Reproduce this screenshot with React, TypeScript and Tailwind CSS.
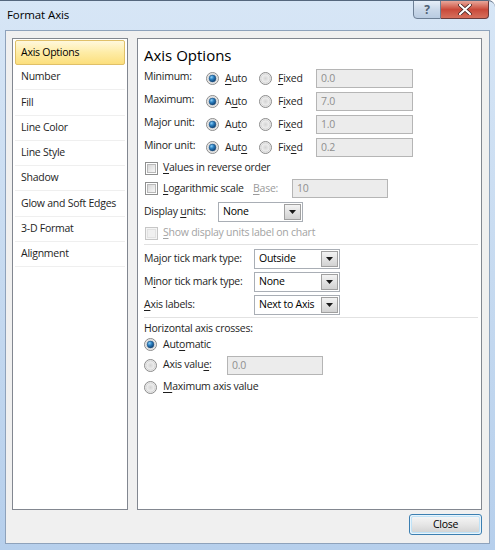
import React from "react";

const FONT = "font-['Segoe_UI','Open_Sans',sans-serif]";

function Radio({ checked = false }: { checked?: boolean }) {
  return (
    <svg width="13" height="13" viewBox="0 0 13 13" className="shrink-0">
      <defs>
        <radialGradient id="rfill" cx="50%" cy="50%" r="55%">
          <stop offset="0" stopColor="#d4d4d4" />
          <stop offset="0.7" stopColor="#ececec" />
          <stop offset="1" stopColor="#fafafa" />
        </radialGradient>
        <radialGradient id="rdot" cx="35%" cy="30%" r="75%">
          <stop offset="0" stopColor="#8fd0f8" />
          <stop offset="0.45" stopColor="#2a7fc0" />
          <stop offset="1" stopColor="#0d3b6b" />
        </radialGradient>
      </defs>
      <circle cx="6.5" cy="6.5" r="6" fill="#f4f4f4" stroke="#8a8a8a" strokeWidth="1" />
      <circle cx="6.5" cy="6.5" r="4.6" fill="url(#rfill)" stroke="#c8c8c8" strokeWidth="0.8" />
      {checked && <circle cx="6.5" cy="6.5" r="3.4" fill="url(#rdot)" stroke="#1c4f80" strokeWidth="0.6" />}
    </svg>
  );
}

function Check({ disabled = false }: { disabled?: boolean }) {
  return (
    <div
      className={`w-[13px] h-[13px] shrink-0 border ${
        disabled ? "border-[#c6c6c6] bg-[#f4f4f4]" : "border-[#8e8f8f] bg-white"
      } p-[1px]`}
    >
      <div
        className={`w-full h-full border ${
          disabled
            ? "border-[#e2e2e2] bg-[#f0f0f0]"
            : "border-[#b9b9b9] bg-gradient-to-br from-[#d8d8d8] to-[#f7f7f7]"
        }`}
      />
    </div>
  );
}

function TextBox({ value, w }: { value: string; w: string }) {
  return (
    <div
      className={`${w} h-[19px] shrink-0 border border-[#b5b5b5] bg-[#ececec] text-[#8f8f8f] pl-[4px] flex items-center leading-none`}
    >
      {value}
    </div>
  );
}

function Select({ value, w }: { value: string; w: string }) {
  return (
    <div
      className={`${w} h-[20px] shrink-0 border border-[#a9aeb5] bg-white flex items-center p-[1px]`}
    >
      <span className="flex-1 pl-[3px] leading-none text-black whitespace-nowrap">{value}</span>
      <div className="w-[17px] h-full shrink-0 border border-[#a0a0a0] bg-gradient-to-b from-[#f3f3f3] to-[#d2d2d2] flex items-center justify-center">
        <svg width="7" height="4" viewBox="0 0 7 4">
          <path d="M0 0 H7 L3.5 4 Z" fill="#1a1a1a" />
        </svg>
      </div>
    </div>
  );
}

function U({ children }: { children: React.ReactNode }) {
  return <span className="underline underline-offset-[2px]">{children}</span>;
}

function AxisRow({
  label,
  auto,
  fixed,
  value,
}: {
  label: string;
  auto: React.ReactNode;
  fixed: React.ReactNode;
  value: string;
}) {
  return (
    <div className="flex h-[23px] items-center">
      <span className="w-[62px] shrink-0 -mt-[4px] whitespace-nowrap">{label}</span>
      <Radio checked />
      <span className="ml-[6px] w-[34px] shrink-0">{auto}</span>
      <Radio />
      <span className="ml-[6px] w-[38px] shrink-0">{fixed}</span>
      <TextBox value={value} w="w-[97px]" />
    </div>
  );
}

const items = [
  "Axis Options",
  "Number",
  "Fill",
  "Line Color",
  "Line Style",
  "Shadow",
  "Glow and Soft Edges",
  "3-D Format",
  "Alignment",
];

export default function App() {
  return (
    <div
      className={`${FONT} w-[495px] h-[550px] overflow-hidden text-[10.5px] tracking-[-0.25px] text-[#1e1e1e] bg-gradient-to-b from-[#d7e6f6] via-[#c6daf0] to-[#b6cfec] rounded-tr-[7px] border-t border-[#55677d] flex flex-col`}
    >
      {/* Title bar */}
      <div className="h-[29px] shrink-0 flex items-start relative">
        <span className="mt-[5px] ml-[7px] text-[11.5px] tracking-[-0.1px] text-black">Format Axis</span>
        <div className="absolute top-[-1px] right-[6px] flex">
          <div className="w-[28px] h-[19px] border border-[#6d7f95] rounded-bl-[4px] bg-gradient-to-b from-[#e6eef8] via-[#cad8e9] to-[#b9cbe1] flex items-center justify-center text-[12px] font-bold text-[#4f5f73]">
            ?
          </div>
          <div className="w-[48px] h-[19px] border border-l-0 border-[#6b3a3a] rounded-br-[4px] bg-gradient-to-b from-[#e7a69a] via-[#c9493a] to-[#d66f5c] flex items-center justify-center">
            <svg width="14" height="11" viewBox="0 0 14 11">
              <path d="M2 1 L12 10 M12 1 L2 10" stroke="#3a2020" strokeWidth="3.6" strokeLinecap="round" />
              <path d="M2 1 L12 10 M12 1 L2 10" stroke="#ffffff" strokeWidth="2.2" strokeLinecap="round" />
            </svg>
          </div>
        </div>
      </div>

      {/* Client area */}
      <div className="ml-[5px] mr-[5px] h-[514px] border border-[#8ea2bb] bg-[#f0f0f0] flex flex-col pt-[7px] pl-[6px] pr-[6px]">
        <div className="flex h-[472px] gap-[9px]">
          {/* Left list */}
          <div className="w-[116px] h-full border border-[#828790] bg-white pt-[1px] px-[2px]">
            {items.map((it, i) =>
              i === 0 ? (
                <div
                  key={it}
                  className="h-[25px] border border-[#e0c068] rounded-[2px] bg-gradient-to-b from-[#fff8dc] via-[#feeca6] to-[#fcdf7c] flex items-center pl-[5px] text-black"
                >
                  {it}
                </div>
              ) : (
                <div
                  key={it}
                  className="h-[25.25px] border-b border-[#efefef] flex items-center pl-[6px] text-[#1e1e1e] whitespace-nowrap"
                >
                  {it}
                </div>
              )
            )}
          </div>

          {/* Right panel */}
          <div className="w-[345px] h-full border border-[#828790] bg-white pl-[6px] pr-[3px] pt-[6px] flex flex-col">
            <div className="h-[22px] text-[15px] tracking-normal leading-[20px] text-black">Axis Options</div>

            <AxisRow label="Minimum:" auto={<><U>A</U>uto</>} fixed={<><U>F</U>ixed</>} value="0.0" />
            <AxisRow label="Maximum:" auto={<>A<U>u</U>to</>} fixed={<>F<U>i</U>xed</>} value="7.0" />
            <AxisRow label="Major unit:" auto={<>Au<U>t</U>o</>} fixed={<>Fi<U>x</U>ed</>} value="1.0" />
            <AxisRow label="Minor unit:" auto={<>Aut<U>o</U></>} fixed={<>Fix<U>e</U>d</>} value="0.2" />

            <div className="flex h-[18px] items-center">
              <div className="ml-[1px]"><Check /></div>
              <span className="ml-[5px]"><U>V</U>alues in reverse order</span>
            </div>
            <div className="flex h-[23px] items-center">
              <div className="ml-[1px]"><Check /></div>
              <span className="ml-[5px] w-[90px] shrink-0 whitespace-nowrap"><U>L</U>ogarithmic scale</span>
              <span className="w-[39px] shrink-0 text-[#9a9a9a]"><U>B</U>ase:</span>
              <TextBox value="10" w="w-[96px]" />
            </div>
            <div className="flex h-[23px] items-center">
              <span className="w-[74px] shrink-0">Display <U>u</U>nits:</span>
              <Select value="None" w="w-[85px]" />
            </div>
            <div className="flex h-[20px] items-center">
              <div className="ml-[1px]"><Check disabled /></div>
              <span className="ml-[5px] text-[#a3a3a3]"><U>S</U>how display units label on chart</span>
            </div>
            <div className="h-[1px] bg-[#e2e2e2] mt-[1px] mb-[2px]" />

            <div className="flex h-[23px] items-center">
              <span className="w-[110px] shrink-0">Ma<U>j</U>or tick mark type:</span>
              <Select value="Outside" w="w-[86px]" />
            </div>
            <div className="flex h-[23px] items-center">
              <span className="w-[110px] shrink-0">M<U>i</U>nor tick mark type:</span>
              <Select value="None" w="w-[86px]" />
            </div>
            <div className="flex h-[23px] items-center">
              <span className="w-[110px] shrink-0"><U>A</U>xis labels:</span>
              <Select value="Next to Axis" w="w-[86px]" />
            </div>
            <div className="h-[1px] bg-[#e2e2e2] mt-[1px] mb-[3px]" />

            <div className="flex h-[15px] items-center">Horizontal axis crosses:</div>
            <div className="flex h-[17px] items-center">
              <Radio checked />
              <span className="ml-[6px]">Aut<U>o</U>matic</span>
            </div>
            <div className="flex h-[24px] items-center">
              <Radio />
              <span className="ml-[6px] w-[64px] shrink-0">Axis valu<U>e</U>:</span>
              <TextBox value="0.0" w="w-[96px]" />
            </div>
            <div className="flex h-[20px] items-center">
              <Radio />
              <span className="ml-[6px]"><U>M</U>aximum axis value</span>
            </div>
          </div>
        </div>

        <div className="flex justify-end mt-[4px] pr-[1px]">
          <div className="w-[73px] h-[21px] rounded-[3px] border border-[#3c7fb1] p-[1px] bg-[#e8f4fb]">
            <div className="w-full h-full rounded-[2px] bg-gradient-to-b from-[#f4f4f4] via-[#e6e6e6] to-[#d4d4d4] border border-[#bfe2f7] flex items-center justify-center text-black">
              Close
            </div>
          </div>
        </div>
      </div>
    </div>
  );
}
